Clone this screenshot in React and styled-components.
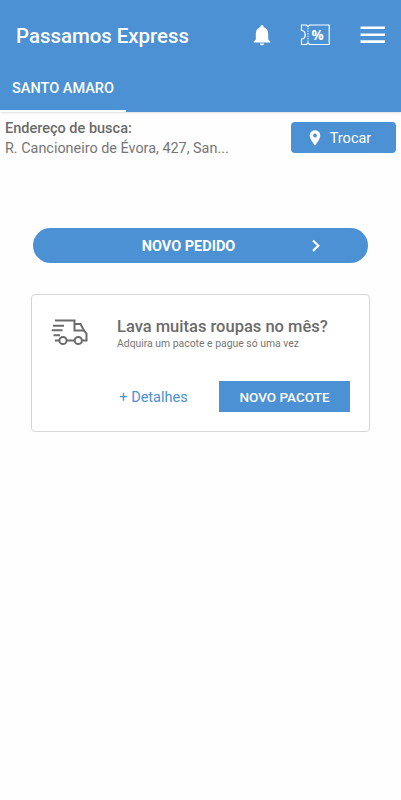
import React from "react"
import styled, { createGlobalStyle } from "styled-components"

export default function App() {
  return (
    <>
      <GlobalStyle />
      <Screen>
        <Header>
          <TopBar>
            <Title>Passamos Express</Title>
            <Actions>
              <BellIcon />
              <CouponIcon />
              <MenuIcon />
            </Actions>
          </TopBar>
          <Tabs>
            <Tab>SANTO AMARO</Tab>
          </Tabs>
        </Header>
        <AddressBar>
          <div>
            <AddressLabel>Endereço de busca:</AddressLabel>
            <AddressText>R. Cancioneiro de Évora, 427, San...</AddressText>
          </div>
          <ChangeButton>
            <PinIcon />
            <ButtonText>Trocar</ButtonText>
          </ChangeButton>
        </AddressBar>
        <OrderButton>
          <span />
          <OrderLabel>NOVO PEDIDO</OrderLabel>
          <ChevronIcon />
        </OrderButton>
        <Card>
          <CardTop>
            <TruckIcon />
            <div>
              <CardTitle>Lava muitas roupas no mês?</CardTitle>
              <CardText>Adquira um pacote e pague só uma vez</CardText>
            </div>
          </CardTop>
          <CardActions>
            <DetailsButton>+ Detalhes</DetailsButton>
            <PackageButton>NOVO PACOTE</PackageButton>
          </CardActions>
        </Card>
      </Screen>
    </>
  )
}

const BellIcon = () => (
  <svg width="18" height="22" viewBox="0 0 18 22" fill="#fff">
    <path d="M9 21.3c1.2 0 2.1-.8 2.1-1.9H6.9c0 1.1.9 1.9 2.1 1.9zM15.2 15.4V9.8c0-3.2-1.7-5.8-4.6-6.5v-.7a1.6 1.6 0 0 0-3.2 0v.7C4.5 4 2.8 6.6 2.8 9.8v5.6L.7 17.5v1h16.6v-1z" />
  </svg>
)

const CouponIcon = () => (
  <svg width="30" height="22" viewBox="0 0 30 22">
    <g fill="none" stroke="#fff">
      <path
        d="M1.5 1H6.5L8 2.6L9.5 1H29.2V20.5H9.5L8 18.9L6.5 20.5H1.5V15C3.6 15 5.2 13.2 5.2 10.8S3.6 6.5 1.5 6.5Z"
        strokeWidth="1.200"
      />
      <path d="M8 4V18.5" strokeDasharray="1.3 1.2" />
    </g>
    <CouponText x="17.5" y="15.8">
      %
    </CouponText>
  </svg>
)

const MenuIcon = () => (
  <svg width="26" height="18" viewBox="0 0 26 18" fill="#fff">
    <path d="M.5.5h24.5v2.6H.5zM.5 7.4h24.5V10H.5zM.5 14.3h24.5v2.6H.5z" />
  </svg>
)

const PinIcon = () => (
  <svg width="12" height="16" viewBox="0 0 12 16">
    <path
      d="M6 .3C3 .3.7 2.6.7 5.5.7 9.4 6 15.5 6 15.5s5.3-6.1 5.3-10C11.3 2.6 9 .3 6 .3zm0 7.1a1.9 1.9 0 1 1 0-3.8 1.9 1.9 0 0 1 0 3.8z"
      fill="#fff"
    />
  </svg>
)

const ChevronIcon = () => (
  <svg width="10" height="14" viewBox="0 0 10 14">
    <path d="M2 1.500L7.3 6.7L2 11.9" fill="none" stroke="#fff" strokeWidth="2.2" />
  </svg>
)

const TruckIcon = () => (
  <svg
    width="38"
    height="28"
    viewBox="0 0 38 28"
    fill="none"
    stroke="#6b6b6b"
    strokeWidth="2"
  >
    <path d="M4 2.5H23.5V12.5H33M2 7.8H13M.7 12.2H11.5M2.5 17.2H9M4 22.5H8" />
    <path d="M23.5 6H29.5L33 12.5L35.5 15.5V22.5H31M15.7 22.5H23.5" />
    <circle cx="12" cy="22.5" r="3.6" />
    <circle cx="27.3" cy="22.5" r="3.6" />
  </svg>
)

const GlobalStyle = createGlobalStyle`
  body {
    margin: 0;
    background: #fefefe;
    font-family: Roboto, sans-serif;
  }
  button {
    border: 0;
    padding: 0;
    font-family: inherit;
  }
  svg {
    display: block;
    flex-shrink: 0;
  }
`
const CouponText = styled.text`
  fill: #ffffff;
  font-family: "Open Sans", sans-serif;
  font-size: 13.5px;
  font-weight: 700;
  text-anchor: middle;
`
const Screen = styled.main`
  min-height: 800px;
  display: flex;
  flex-direction: column;
`
const Header = styled.header`
  height: 112px;
  display: flex;
  flex-direction: column;
  justify-content: space-between;
  background: #4b91d3;
  color: #ffffff;
  box-shadow: 0 1px 2px rgba(0, 0, 0, 0.12);
`
const TopBar = styled.div`
  height: 70px;
  display: flex;
  align-items: center;
  justify-content: space-between;
  padding: 0 15px 0 16px;
`
const Title = styled.h1`
  margin: 0;
  padding-top: 2px;
  font-size: 20.4px;
  font-weight: 500;
`
const Actions = styled.div`
  display: flex;
  align-items: center;
  gap: 29px;
  svg:last-child {
    margin-left: 1px;
  }
`
const Tabs = styled.nav`
  display: flex;
`
const Tab = styled.div`
  width: 126px;
  height: 42px;
  box-sizing: border-box;
  padding-top: 10px;
  border-bottom: 2px solid #ffffff;
  font-size: 14.5px;
  font-weight: 500;
  line-height: 17px;
  text-align: center;
`
const AddressBar = styled.section`
  display: flex;
  justify-content: space-between;
  padding: 7px 5px 0;
  color: #6b6b6b;
`
const AddressLabel = styled.div`
  font-size: 14.5px;
  font-weight: 500;
  line-height: 19px;
`
const AddressText = styled.div`
  padding-top: 1px;
  color: #767676;
  font-size: 14.4px;
  line-height: 19px;
  white-space: nowrap;
`
const ChangeButton = styled.button`
  width: 105px;
  height: 31px;
  margin-top: 3px;
  display: flex;
  align-items: center;
  justify-content: center;
  gap: 9px;
  padding-right: 7px;
  border-radius: 4px;
  background: #4b91d3;
  color: #ffffff;
  font-size: 14.5px;
`
const ButtonText = styled.span`
  padding-top: 2px;
`
const OrderButton = styled.button`
  width: 335px;
  height: 35px;
  margin: 70px 0 0 33px;
  display: grid;
  grid-template-columns: 1fr auto 1fr;
  align-items: center;
  border-radius: 18px;
  background: #4b91d3;
  color: #ffffff;
  padding-right: 24px;
  svg {
    justify-self: end;
    margin-right: 23px;
  }
`
const OrderLabel = styled.span`
  padding-top: 1px;
  font-size: 14.5px;
  font-weight: 700;
`
const Card = styled.section`
  width: 339px;
  height: 138px;
  margin: 31px 0 0 31px;
  box-sizing: border-box;
  border: 1px solid #d6d6d6;
  border-radius: 4px;
  background: #ffffff;
`
const CardTop = styled.div`
  height: 86px;
  display: flex;
  gap: 28px;
  padding: 23px 0 0 19px;
  box-sizing: border-box;
  color: #6b6b6b;
`
const CardTitle = styled.h2`
  margin: 0;
  font-size: 16.5px;
  font-weight: 500;
  line-height: 18px;
`
const CardText = styled.p`
  margin: 1px 0 0;
  color: #767676;
  font-size: 10.4px;
  line-height: 14px;
`
const CardActions = styled.div`
  display: flex;
  justify-content: flex-end;
  padding-right: 19px;
`
const DetailsButton = styled.button`
  width: 131px;
  height: 31px;
  padding-top: 2px;
  background: none;
  color: #4b91d3;
  font-size: 14.5px;
`
const PackageButton = styled.button`
  width: 131px;
  height: 31px;
  background: #4b91d3;
  color: #ffffff;
  font-size: 13.5px;
  font-weight: 500;
`
